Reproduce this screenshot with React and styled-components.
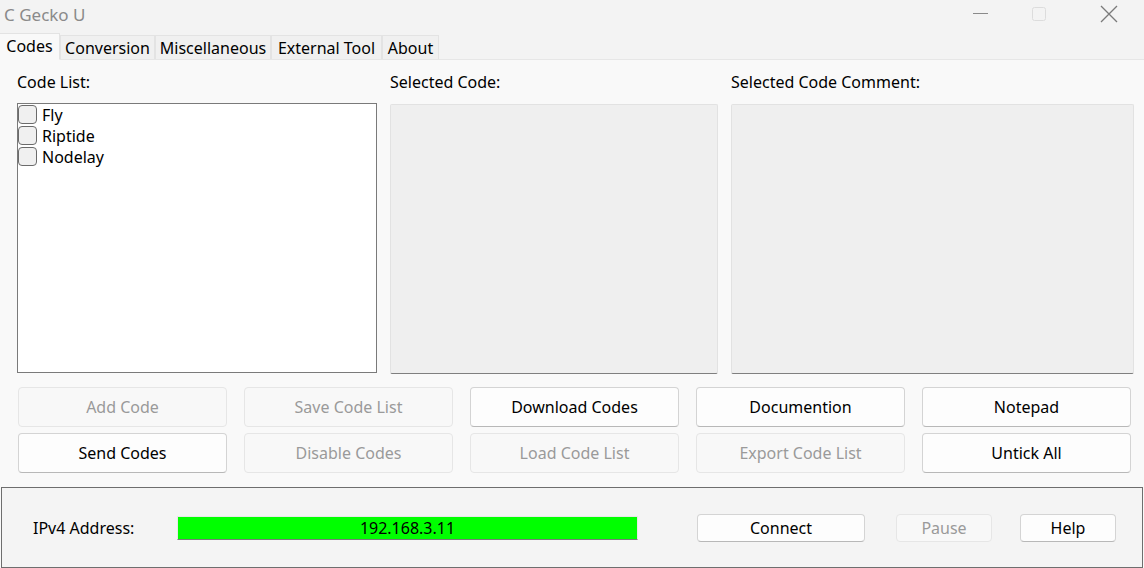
import React from 'react';
import styled, { createGlobalStyle } from 'styled-components';

const Global = createGlobalStyle`
	html, body {
		margin: 0;
		padding: 0;
		background: #f3f3f3;
	}
	body {
		font-family: "Noto Sans", "Liberation Sans", sans-serif;
		font-weight: 400;
		color: #000;
	}
`;

const Window = styled.div`
	width: 1144px;
	height: 568px;
	display: flex;
	flex-direction: column;
	background: #f3f3f3;
	overflow: hidden;
`;

const TitleBar = styled.div`
	height: 34px;
	display: flex;
	align-items: center;
	padding-left: 4px;
	.title {
		font-size: 17px;
		color: #8a8a8a;
		flex: 1;
		margin-top: -4px;
	}
`;

const Caption = styled.div`
	width: ${p => p.w}px;
	height: 34px;
	display: flex;
	align-items: center;
	justify-content: center;
	margin-top: -4px;
`;

const TabStrip = styled.div`
	display: flex;
	align-items: flex-end;
	height: 27px;
	border-bottom: 1px solid #e6e6e6;
`;

const Tab = styled.div`
	height: ${p => (p.active ? 27 : 24)}px;
	width: ${p => p.w}px;
	font-size: 16px;
	line-height: 24px;
	background: ${p => (p.active ? '#f9f9f9' : '#f0f0f0')};
	border: 1px solid #e3e3e3;
	border-bottom: ${p => (p.active ? '1px solid #f9f9f9' : 'none')};
	border-left: ${p => (p.active ? 'none' : '1px solid #e3e3e3')};
	margin-bottom: ${p => (p.active ? -1 : 0)}px;
	box-sizing: border-box;
	white-space: nowrap;
	display: flex;
	justify-content: center;
	align-items: ${p => (p.active ? 'flex-start' : 'center')};
`;

const Page = styled.div`
	flex: 1;
	background: #f9f9f9;
	display: flex;
	flex-direction: column;
`;

const Panels = styled.div`
	display: grid;
	grid-template-columns: 360px 328px 403px;
	column-gap: 13px;
	padding: 10px 0 0 17px;
`;

const Column = styled.div`
	display: flex;
	flex-direction: column;
`;

const Label = styled.div`
	font-size: 16px;
	height: 23px;
	line-height: 25px;
	margin-bottom: 10px;
`;

const ListBox = styled.div`
	height: 270px;
	background: #fff;
	border: 1px solid #7a7a7a;
	box-sizing: border-box;
	display: flex;
	flex-direction: column;
`;

const Item = styled.label`
	display: flex;
	align-items: center;
	height: 21px;
	font-size: 16px;
	gap: 5px;
`;

const Check = styled.span`
	width: 19px;
	height: 19px;
	border: 1px solid #6b6b6b;
	border-radius: 4px;
	background: #f0f0f0;
	box-sizing: border-box;
`;

const ReadBox = styled.div`
	height: 270px;
	margin-top: 1px;
	background: #efefef;
	border: 1px solid #e2e2e2;
	border-bottom: 1px solid #7f7f7f;
	box-sizing: border-box;
	border-radius: 2px;
`;

const Buttons = styled.div`
	display: grid;
	grid-template-columns: repeat(5, 209px);
	grid-auto-rows: 40px;
	column-gap: 17px;
	row-gap: 6px;
	padding: 13px 0 0 18px;
`;

const Button = styled.button`
	font-family: inherit;
	font-weight: 400;
	font-size: 16px;
	border-radius: 4px;
	box-sizing: border-box;
	width: ${p => (p.w ? `${p.w}px` : 'auto')};
	height: ${p => (p.h ? `${p.h}px` : 'auto')};
	padding: 0;
	background: ${p => (p.disabled ? '#f8f8f8' : '#fdfdfd')};
	color: ${p => (p.disabled ? '#9a9a9a' : '#000')};
	border: 1px solid ${p => (p.disabled ? '#e6e6e6' : '#d4d4d4')};
	border-bottom-color: ${p => (p.disabled ? '#e6e6e6' : '#b8b8b8')};
`;

const Group = styled.div`
	margin-top: 14px;
	height: 81px;
	border: 1px solid #6e6e6e;
	background: #f4f4f4;
	box-sizing: border-box;
	display: flex;
	align-items: center;
	padding-left: 31px;
	margin-left: 1px;
	margin-right: 1px;
`;

const AddressLabel = styled.div`
	font-size: 16px;
	width: 144px;
	margin-top: 1px;
`;

const Address = styled.div`
	width: 461px;
	height: 24px;
	background: #00ff00;
	border: 1px solid #e8e8e8;
	border-bottom: 1px solid #7a7a7a;
	box-sizing: border-box;
	font-size: 16px;
	display: flex;
	align-items: center;
	justify-content: center;
	margin-right: 59px;
`;

const GroupButtons = styled.div`
	display: flex;
	align-items: center;
	gap: 31px;
	.help {
		margin-left: -3px;
	}
`;

const tabs = [
	['Codes', 60],
	['Conversion', 95],
	['Miscellaneous', 116],
	['External Tool', 111],
	['About', 57],
];

export default function App() {
	return (
		<Window>
			<Global />
			<TitleBar>
				<span className="title">C Gecko U</span>
				<Caption w={46}>
					<svg width="16" height="2"><rect width="15" height="1" fill="#8a8a8a" /></svg>
				</Caption>
				<Caption w={70}>
					<svg width="16" height="16"><rect x="1.5" y="1.5" width="13" height="13" rx="2" fill="none" stroke="#dcdcdc" /></svg>
				</Caption>
				<Caption w={70}>
					<svg width="18" height="18"><path d="M1 1L17 17M17 1L1 17" stroke="#7a7a7a" strokeWidth="1.3" /></svg>
				</Caption>
			</TitleBar>
			<TabStrip>
				{tabs.map(([name, w], i) => (
					<Tab key={name} w={w} active={i === 0}>{name}</Tab>
				))}
			</TabStrip>
			<Page>
				<Panels>
					<Column>
						<Label>Code List:</Label>
						<ListBox>
							{['Fly', 'Riptide', 'Nodelay'].map(name => (
								<Item key={name}>
									<Check />
									{name}
								</Item>
							))}
						</ListBox>
					</Column>
					<Column>
						<Label>Selected Code:</Label>
						<ReadBox />
					</Column>
					<Column>
						<Label>Selected Code Comment:</Label>
						<ReadBox />
					</Column>
				</Panels>
				<Buttons>
					<Button disabled>Add Code</Button>
					<Button disabled>Save Code List</Button>
					<Button>Download Codes</Button>
					<Button>Documention</Button>
					<Button>Notepad</Button>
					<Button>Send Codes</Button>
					<Button disabled>Disable Codes</Button>
					<Button disabled>Load Code List</Button>
					<Button disabled>Export Code List</Button>
					<Button>Untick All</Button>
				</Buttons>
				<Group>
					<AddressLabel>IPv4 Address:</AddressLabel>
					<Address>192.168.3.11</Address>
					<GroupButtons>
						<Button w={168} h={28}>Connect</Button>
						<Button w={96} h={28} disabled>Pause</Button>
						<Button w={96} h={28} className="help">Help</Button>
					</GroupButtons>
				</Group>
			</Page>
		</Window>
	);
}
